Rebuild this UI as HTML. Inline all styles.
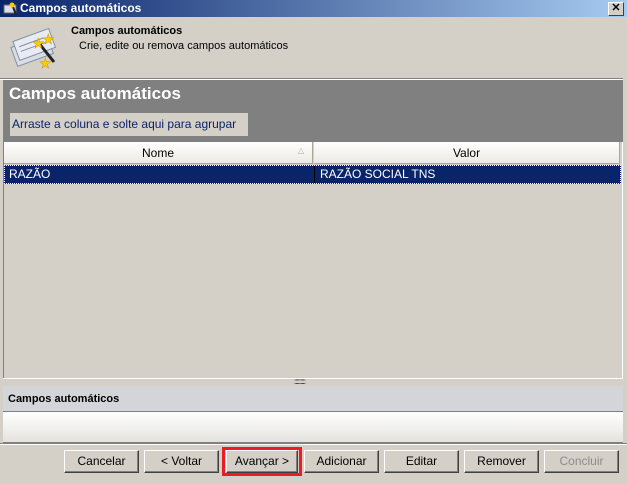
<!DOCTYPE html>
<html><head><meta charset="utf-8"><style>
*{margin:0;padding:0;box-sizing:border-box}
body{width:627px;height:484px;background:#d4d0c8;font-family:"Liberation Sans",sans-serif;font-size:11px;position:relative;overflow:hidden;color:#000}
.a{position:absolute}
.btn{position:absolute;top:450px;height:23px;background:#d4d0c8;border:1px solid;border-color:#fff #404040 #404040 #fff;box-shadow:inset -1px -1px 0 #808080;text-align:center;line-height:21px;font-size:12px}
</style></head><body>
<div class="a" style="left:0;top:0;width:627px;height:17px;background:linear-gradient(90deg,#0a246a,#a6caf0)"></div>
<svg class="a" style="left:2px;top:1px" width="16" height="15"><rect x="2" y="4" width="12" height="8" fill="#dde" stroke="#666"/><path d="M10 3 L14 14" stroke="#222" stroke-width="2"/><circle cx="10" cy="4" r="2.5" fill="#fc0"/></svg>
<div class="a" style="left:20px;top:1px;color:#fff;font-weight:bold;font-size:12px">Campos automáticos</div>
<div class="a" style="left:608px;top:2px;width:16px;height:14px;background:#d4d0c8;border:1px solid;border-color:#fff #404040 #404040 #fff;font-size:11px;line-height:11px;text-align:center;font-weight:bold">✕</div>
<svg class="a" style="left:8px;top:22px" width="50" height="50"><g transform="rotate(-20 25 25)"><rect x="4" y="18" width="38" height="20" fill="#d8dde8" stroke="#8090a0"/><rect x="8" y="13" width="38" height="20" fill="#e8ecf2" stroke="#8090a0"/><line x1="12" y1="20" x2="38" y2="20" stroke="#8090a0"/><line x1="12" y1="25" x2="38" y2="25" stroke="#8090a0"/></g><path d="M30 20 L46 40" stroke="#222" stroke-width="3"/><text x="24" y="26" font-size="14" fill="#fc0" stroke="#c90" stroke-width=".5">★</text><text x="34" y="22" font-size="14" fill="#fc0" stroke="#c90" stroke-width=".5">★</text><text x="31" y="46" font-size="14" fill="#fc0" stroke="#c90" stroke-width=".5">★</text></svg>
<div class="a" style="left:71px;top:25px;font-weight:bold;font-size:11px">Campos automáticos</div>
<div class="a" style="left:79px;top:40px;font-size:11px">Crie, edite ou remova campos automáticos</div>
<div class="a" style="left:0;top:78px;width:623px;height:1px;background:#808080"></div>
<div class="a" style="left:0;top:79px;width:623px;height:1px;background:#fff"></div>
<div class="a" style="left:3px;top:80px;width:620px;height:62px;background:#808080"></div>
<div class="a" style="left:9px;top:84px;color:#fff;font-weight:bold;font-size:17px">Campos automáticos</div>
<div class="a" style="left:10px;top:113px;width:238px;height:23px;background:#d4d0c8;color:#0a246a;font-size:12px;line-height:23px;padding-left:2px">Arraste a coluna e solte aqui para agrupar</div>
<div class="a" style="left:3px;top:142px;width:620px;height:236px;background:#d4d0c8;border-left:1px solid #808080;border-right:1px solid #fff"></div>
<div class="a" style="left:4px;top:142px;width:309px;height:22px;background:linear-gradient(#fff,#ebe9e3);border-right:1px solid #aca899;border-bottom:1px solid #aca899;text-align:center;line-height:22px;font-size:12px">Nome</div>
<div class="a" style="left:298px;top:146px;font-size:8px;color:#aaa">△</div>
<div class="a" style="left:314px;top:142px;width:306px;height:22px;background:linear-gradient(#fff,#ebe9e3);border-bottom:1px solid #aca899;border-right:1px solid #aca899;text-align:center;line-height:22px;font-size:12px">Valor</div>
<div class="a" style="left:4px;top:165px;width:617px;height:19px;background:#0a246a;border:1px dotted #fff;color:#fff;font-size:12px;line-height:17px"><span style="position:absolute;left:4px">RAZÃO</span><span style="position:absolute;left:309px;top:0;width:1px;height:17px;background:#000"></span><span style="position:absolute;left:315px">RAZÃO SOCIAL TNS</span></div>
<div class="a" style="left:3px;top:378px;width:620px;height:8px;background:#d4d0c8;border-top:1px solid #fff"></div>
<div class="a" style="left:294px;top:380px;font-size:8px;line-height:4px;letter-spacing:-1px">:::::::::</div>
<div class="a" style="left:3px;top:386px;width:620px;height:26px;background:#d4d5d9;border-bottom:1px solid #808080;font-weight:bold;font-size:11px;line-height:26px;padding-left:5px">Campos automáticos</div>
<div class="a" style="left:3px;top:412px;width:620px;height:31px;background:linear-gradient(#fff,#e4e3df);border-bottom:1px solid #808080"></div>
<div class="a" style="left:0;top:443px;width:627px;height:1px;background:#808080"></div>
<div class="a" style="left:0;top:444px;width:627px;height:1px;background:#fff"></div>
<div class="btn" style="left:64px;width:75px">Cancelar</div>
<div class="btn" style="left:144px;width:75px">&lt; Voltar</div>
<div class="a" style="left:222px;top:447px;width:80px;height:29px;border:3px solid #ed1c24"></div>
<div class="btn" style="left:226px;width:72px">Avançar &gt;</div>
<div class="btn" style="left:304px;width:75px">Adicionar</div>
<div class="btn" style="left:384px;width:75px">Editar</div>
<div class="btn" style="left:464px;width:75px">Remover</div>
<div class="btn" style="left:544px;width:75px;color:#8c8c8c">Concluir</div>
</body></html>
